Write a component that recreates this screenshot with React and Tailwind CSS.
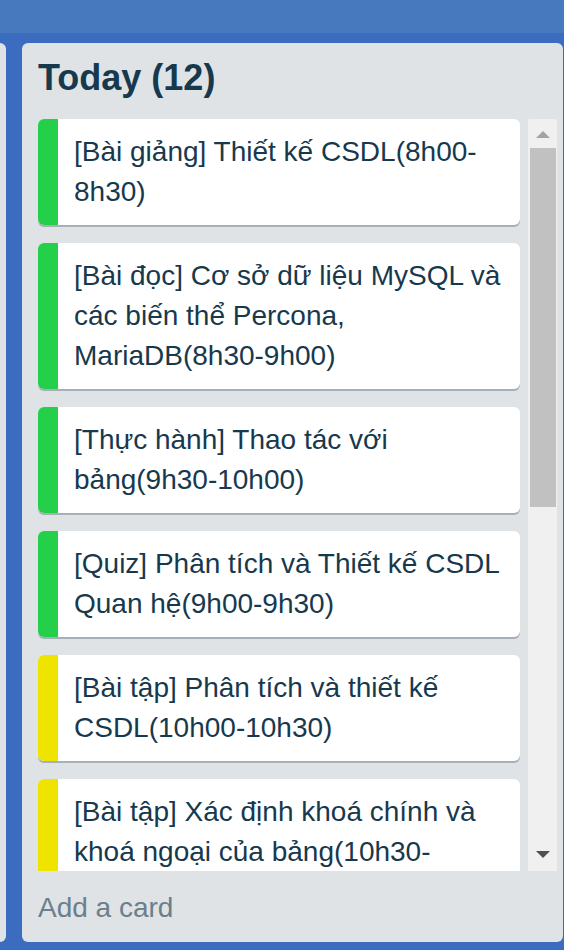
import React from "react";

const cards = [
  { color: "bg-[#24d04a]", text: "[Bài giảng] Thiết kế CSDL(8h00-8h30)" },
  { color: "bg-[#24d04a]", text: "[Bài đọc] Cơ sở dữ liệu MySQL và các biến thể Percona, MariaDB(8h30-9h00)" },
  { color: "bg-[#24d04a]", text: "[Thực hành] Thao tác với bảng(9h30-10h00)" },
  { color: "bg-[#24d04a]", text: "[Quiz] Phân tích và Thiết kế CSDL Quan hệ(9h00-9h30)" },
  { color: "bg-[#eee400]", text: "[Bài tập] Phân tích và thiết kế CSDL(10h00-10h30)" },
  { color: "bg-[#eee400]", text: "[Bài tập] Xác định khoá chính và khoá ngoại của bảng(10h30-11h00)" },
  { color: "bg-[#eee400]", text: "[Bài tập] Chuẩn hoá dữ liệu(11h00-11h30)" },
  { color: "bg-[#24d04a]", text: "[Bài giảng] Ngôn ngữ SQL(13h30-14h00)" },
  { color: "bg-[#24d04a]", text: "[Thực hành] Truy vấn dữ liệu(14h00-14h30)" },
  { color: "bg-[#eee400]", text: "[Bài tập] Truy vấn nâng cao(14h30-15h00)" },
  { color: "bg-[#24d04a]", text: "[Quiz] Ngôn ngữ SQL(15h00-15h30)" },
  { color: "bg-[#eee400]", text: "[Bài tập] Tổng kết(15h30-16h00)" },
];

export default function App() {
  return (
    <div
      className="w-[564px] h-[950px] overflow-hidden bg-[#3b6cc0] flex flex-col"
      style={{ fontFamily: '"Liberation Sans", Arial, Helvetica, sans-serif' }}
    >
      <div className="h-[33px] bg-[#4679be] shrink-0" />
      <div className="h-[10px] shrink-0" />
      <div className="flex flex-1 min-h-0 pb-[8px]">
        <div className="w-[6px] bg-[#dfe3e6] rounded-tr-[6px] rounded-br-[6px] shrink-0" />
        <div className="w-[16px] shrink-0" />
        <div className="w-[541px] bg-[#dfe3e6] rounded-[6px] flex flex-col pl-[16px] pr-[6px] pt-[13px] pb-[14px]">
          <h1 className="text-[36px] leading-[44px] font-bold text-[#17394d] m-0">Today (12)</h1>
          <div className="mt-[19px] flex h-[752px] shrink-0">
            <div className="w-[482px] overflow-hidden flex flex-col gap-[18px]">
              {cards.map((c, i) => (
                <div
                  key={i}
                  className="bg-white rounded-[6px] flex shadow-[0_2px_0_#a7b0b9] shrink-0 overflow-hidden"
                >
                  <div className={`w-[20px] shrink-0 ${c.color}`} />
                  <div className="pl-[16px] pr-[14px] pt-[13px] pb-[13px] text-[28px] leading-[40px] text-[#17394d]">
                    {c.text}
                  </div>
                </div>
              ))}
            </div>
            <div className="w-[8px] shrink-0" />
            <div className="w-[29px] shrink-0 bg-[#f0f0f0] rounded-t-[2px] flex flex-col items-center">
              <svg width="14" height="8" viewBox="0 0 14 8" className="mt-[12px]">
                <polygon points="7,0 14,7 0,7" fill="#a3a3a3" />
              </svg>
              <div className="mt-[9px] w-[26px] h-[359px] bg-[#c1c1c1]" />
              <div className="flex-1" />
              <svg width="14" height="8" viewBox="0 0 14 8" className="mb-[12px]">
                <polygon points="0,0 14,0 7,7" fill="#505050" />
              </svg>
            </div>
          </div>
          <div className="mt-[17px] text-[28px] leading-[40px] text-[#6b7f8c]">Add a card</div>
        </div>
        <div className="w-[1px] shrink-0" />
      </div>
    </div>
  );
}
